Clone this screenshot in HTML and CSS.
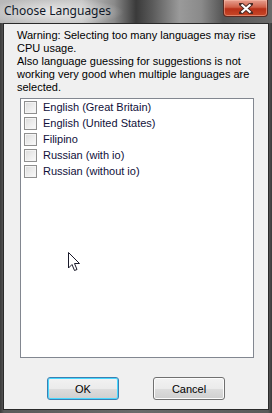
FILE: index.html
```html
<!DOCTYPE html>
<html lang="en">
<head>
    <meta charset="UTF-8">
    <title>Choose Languages</title>
    <link rel="stylesheet" href="styles.css">
</head>
<body>

<div class="window">
    <div class="titlebar">
        <span class="title">Choose Languages</span>
        <span class="close">
            <svg width="14" height="11" viewBox="0 0 14 11">
                <path d="M2 1 L12 10 M12 1 L2 10" stroke="#4a2a24" stroke-width="4" stroke-linecap="square"/>
                <path d="M2.5 1.5 L11.5 9.5 M11.5 1.5 L2.5 9.5" stroke="#fff" stroke-width="2.2"/>
            </svg>
        </span>
    </div>

    <div class="client">
        <p class="warning">Warning: Selecting too many languages may rise CPU usage.<br>Also language guessing for suggestions is not working very good when multiple languages are selected.</p>

        <ul class="lang_list">
            <li><span class="check"></span>English (Great Britain)</li>
            <li><span class="check"></span>English (United States)</li>
            <li><span class="check"></span>Filipino</li>
            <li><span class="check"></span>Russian (with io)</li>
            <li><span class="check"></span>Russian (without io)</li>
        </ul>

        <div class="buttons">
            <button class="btn btn-default">OK</button>
            <button class="btn">Cancel</button>
        </div>

        <svg class="cursor" width="13" height="20" viewBox="0 0 13 20">
            <path d="M0.5 0.5 L0.5 16 L4 12.5 L6.5 18.5 L9 17.5 L6.5 11.5 L11.5 11.5 Z" fill="#fff" stroke="#1a1a2a" stroke-width="1"/>
        </svg>
    </div>
</div>

</body>
</html>
```

FILE: styles.css
```css
body {
    margin: 0;
    font-family: "Liberation Sans", Arial, sans-serif;
}

.window {
    width: 272px;
    height: 413px;
    display: flex;
    flex-direction: column;
    background: linear-gradient(to right, #3a3a3a 0, #5a5a5a 4px, #6a6a6a 50%, #5a5a5a calc(100% - 4px), #3a3a3a 100%);
    box-sizing: border-box;
}

.titlebar {
    height: 23px;
    flex: none;
    display: flex;
    align-items: flex-start;
    padding-left: 4px;
    background:
        radial-gradient(ellipse 70px 14px at 54px 12px, rgba(235, 235, 235, .95), rgba(235, 235, 235, 0)),
        linear-gradient(to right, #b8b8b8 0, #c4c4c4 30%, #8a8a8a 42%, #3a3a3a 50%, #5a5a5a 56%, #9a9a9a 66%, #8a8a8a 74%, #555 82%, #6a6a6a 100%);
}

.title {
    font-family: "Noto Sans", sans-serif;
    font-size: 12px;
    line-height: 14px;
    margin-top: 4px;
    color: #101828;
}

.close {
    margin-left: auto;
    margin-right: 4px;
    width: 45px;
    height: 17px;
    box-sizing: border-box;
    border: 1px solid #5a2a22;
    border-top: none;
    border-radius: 0 0 4px 4px;
    background: linear-gradient(to bottom, #e8a090 0, #d06048 45%, #b83018 55%, #c84828 100%);
    box-shadow: inset 0 0 0 1px rgba(255, 200, 180, .45);
    display: flex;
    align-items: center;
    justify-content: center;
}

.client {
    position: relative;
    flex: 1;
    margin: 0 3px 3px 3px;
    background: #f0f0f0;
    border: 1px solid #2a2a2a;
    display: flex;
    flex-direction: column;
    font-size: 11px;
    color: #000;
}

.warning {
    margin: 5px 0 0 13px;
    width: 240px;
    line-height: 13px;
}

.lang_list {
    list-style: none;
    box-sizing: border-box;
    margin: 4px 0 0 16px;
    padding: 0 0 0 2px;
    width: 234px;
    height: 260px;
    background: #fff;
    border: 1px solid #828790;
}

.lang_list li {
    height: 16px;
    display: flex;
    align-items: center;
    gap: 6px;
    padding-left: 1px;
    color: #10103a;
}

.check {
    width: 13px;
    height: 13px;
    box-sizing: border-box;
    border: 1px solid #8f8f8f;
    background: linear-gradient(135deg, #dcdcdc, #fbfbfb);
    box-shadow: inset 0 0 0 1px #f4f4f4;
}

.buttons {
    display: flex;
    gap: 34px;
    margin: auto 0 9px 43px;
}

.btn {
    width: 72px;
    height: 23px;
    font-family: "Liberation Sans", Arial, sans-serif;
    font-size: 11px;
    color: #000;
    border: 1px solid #707070;
    border-radius: 3px;
    background: linear-gradient(to bottom, #f2f2f2 0, #ebebeb 50%, #dddddd 51%, #cfcfcf 100%);
    box-shadow: inset 0 0 0 1px #fcfcfc;
    padding: 0;
}

.btn-default {
    border-color: #3c7fb1;
    box-shadow: inset 0 0 0 1px #48d8ff;
}

.cursor {
    position: absolute;
    left: 64px;
    top: 228px;
}
```
